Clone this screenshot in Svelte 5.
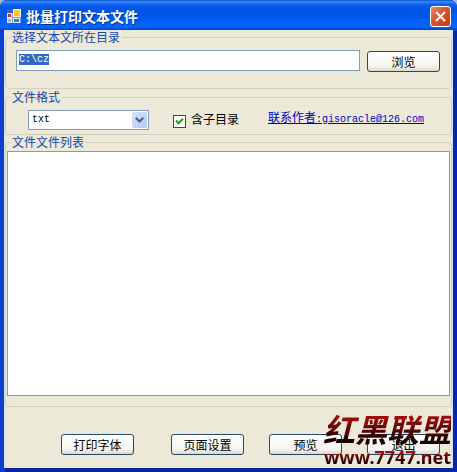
<script lang="ts">
    import { onMount } from "svelte";

    const formats = ["txt", "log", "ini"];

    let directory = $state("C:\\cz");
    let format = $state("txt");
    let includeSub = $state(true);

    let directoryInput: HTMLInputElement;

    onMount(() => {
        directoryInput.focus();
        directoryInput.select();
    });
</script>

<div class="window">
    <header class="titlebar">
        <svg class="app-icon" width="14" height="14" viewBox="0 0 14 14" aria-hidden="true">
            <rect width="14" height="14" fill="#7fa4e4" />
            <rect width="6" height="4" fill="#1f62e8" />
            <rect x="0.5" y="4.5" width="4" height="4" fill="#c8321e" stroke="#f3dcd4" />
            <rect x="6.5" y="0.5" width="7" height="7" fill="#ffc62e" stroke="#fff3c4" />
            <rect x="0.5" y="9.5" width="4" height="4" fill="#8fb2ea" stroke="#dfe9f8" />
            <rect x="6.5" y="9.5" width="6" height="4" fill="#3d78dc" stroke="#dfe9f8" />
        </svg>
        <h1>批量打印文本文件</h1>
        <button class="close" aria-label="关闭">
            <svg width="19" height="19" viewBox="0 0 19 19">
                <path d="M5 5L14 14M14 5L5 14" stroke="#fff" stroke-width="2.2" />
            </svg>
        </button>
    </header>

    <main>
        <fieldset class="directory">
            <legend>选择文本文所在目录</legend>
            <div class="row">
                <input
                    class="path"
                    type="text"
                    aria-label="目录"
                    bind:this={directoryInput}
                    bind:value={directory}
                />
                <button class="btn">浏览</button>
            </div>
        </fieldset>

        <fieldset class="format">
            <legend>文件格式</legend>
            <div class="row">
                <div class="combo">
                    <select aria-label="文件格式" bind:value={format}>
                        {#each formats as f}
                            <option value={f}>{f}</option>
                        {/each}
                    </select>
                    <span class="arrow">
                        <svg width="9" height="6" viewBox="0 0 9 6">
                            <path d="M0.7 0.7L4.5 4.5L8.3 0.7" fill="none" stroke="#4d6185" stroke-width="2" />
                        </svg>
                    </span>
                </div>
                <label class="check">
                    <input type="checkbox" bind:checked={includeSub} />
                    含子目录
                </label>
                <a href="mailto:gisoracle@126.com">联系作者<span class="latin">:gisoracle@126.com</span></a>
            </div>
        </fieldset>

        <fieldset class="files">
            <legend>文件文件列表</legend>
            <select class="list" multiple aria-label="文件列表"></select>
        </fieldset>

        <footer>
            <button class="btn">打印字体</button>
            <button class="btn second">页面设置</button>
            <button class="btn">预览</button>
            <button class="btn">退出</button>
            <div class="watermark">
                <span class="brand">红黑联盟</span>
                <span class="site">www.7747.net</span>
            </div>
        </footer>
    </main>
</div>

<style>
    :global(body) {
        background: #a9b9d0;
    }

    .window,
    .window * {
        box-sizing: border-box;
    }

    .window {
        display: flex;
        flex-direction: column;
        min-height: 100vh;
        overflow: hidden;
        border-radius: 7px 7px 0 0;
        background: #0a3fd0;
        color: #000;
        font: 12px/14px "Liberation Mono", "Noto Sans CJK SC", sans-serif;
    }

    button,
    input,
    select {
        margin: 0;
        font: inherit;
        color: inherit;
    }

    .titlebar {
        display: flex;
        align-items: center;
        height: 30px;
        padding: 2px 6px 0 7px;
        background: linear-gradient(
            #0a50cf 0%,
            #3a8cff 6%,
            #0f62ee 14%,
            #0254e3 30%,
            #0058ea 60%,
            #0566fc 84%,
            #0260f4 92%,
            #0340c0 100%
        );
    }

    h1 {
        flex: 1;
        margin: 0 0 0 5px;
        color: #fff;
        font: bold 14px/20px "Noto Sans CJK SC", sans-serif;
        text-shadow: 1px 1px #0a2f8c;
    }

    .close {
        display: grid;
        place-items: center;
        width: 21px;
        height: 21px;
        padding: 0;
        border: 1px solid #fff;
        border-radius: 3px;
        background: linear-gradient(135deg, #e98a6c, #dc5130 45%, #c43a17);
    }

    main {
        flex: 1;
        display: flex;
        flex-direction: column;
        margin: 0 4px 4px;
        border-right: 1px solid #cfe0f5;
        border-left: 1px solid #dbe6f2;
        box-shadow: 3px 3px 0 2px #0526a8;
        background: #ece9d8;
    }

    fieldset {
        min-width: 0;
        margin: 0;
        padding: 0;
        border: 1px solid #d0d0bf;
        border-radius: 4px;
    }

    legend {
        margin-left: 4px;
        padding: 0 2px;
        color: #1646a8;
        font: 12px/14px "Noto Sans CJK SC", sans-serif;
    }

    .row {
        display: flex;
    }

    .directory {
        height: 59px;
        margin-bottom: 1px;
    }

    .directory .row {
        gap: 7px;
        padding: 6px 11px 0 10px;
    }

    .path {
        flex: 1;
        min-width: 0;
        height: 21px;
        padding: 0 2px 3px;
        border: 1px solid #7f9db9;
        outline: none;
        background: #fff;
        font-size: 10px;
    }

    .path::selection {
        background: #316ac5;
        color: #fff;
    }

    .btn {
        flex: none;
        width: 73px;
        height: 21px;
        padding: 0;
        border: 1px solid #24486b;
        border-radius: 3px;
        background: linear-gradient(#fff, #f5f4ee 75%, #dcd8cb);
        font: 12px/18px "Noto Sans CJK SC", sans-serif;
    }

    .directory .btn {
        margin-top: 1px;
    }

    .format {
        height: 45px;
    }

    .format .row {
        align-items: flex-start;
        padding: 6px 0 0 22px;
    }

    .combo {
        display: grid;
        width: 121px;
        height: 20px;
    }

    .combo > * {
        grid-area: 1 / 1;
    }

    .combo select {
        appearance: none;
        padding: 0 20px 0 3px;
        border: 1px solid #7f9db9;
        border-radius: 0;
        background: #fff;
        font-size: 10px;
    }

    .arrow {
        display: grid;
        place-items: center;
        justify-self: end;
        width: 15px;
        margin: 2px;
        border-radius: 2px;
        background: linear-gradient(135deg, #d6e2fd, #b4c8f6);
        pointer-events: none;
    }

    .check {
        display: flex;
        align-items: center;
        gap: 5px;
        width: 95px;
        margin: 4px 0 0 24px;
    }

    .check input {
        appearance: none;
        width: 13px;
        height: 13px;
        border: 1px solid #1c5180;
        background: #fff;
    }

    .check input:checked {
        background: #fff
            url("data:image/svg+xml,%3Csvg xmlns='http://www.w3.org/2000/svg' viewBox='0 0 11 11'%3E%3Cpath d='M2 4.5L4.5 7.2L9 2.7' fill='none' stroke='%2321a121' stroke-width='2.2'/%3E%3C/svg%3E");
    }

    a {
        margin-top: 2px;
        color: #0000c8;
        white-space: nowrap;
    }

    .latin {
        font-size: 10px;
    }

    .files {
        flex: 1;
        padding: 2px 1px 10px;
    }

    .files legend {
        margin-left: 3px;
    }

    .list {
        display: block;
        width: 100%;
        height: calc(100vh - 227px);
        min-height: 100px;
        border: 1px solid #7f9db9;
        border-radius: 0;
        outline: none;
        background: #fff;
    }

    footer {
        position: relative;
        display: flex;
        justify-content: flex-end;
        gap: 25px;
        padding: 27px 12px 13px;
    }

    .second {
        margin-left: 12px;
    }

    /* site stamp laid over the last two buttons */
    .watermark {
        position: absolute;
        right: 1px;
        bottom: 2px;
        display: flex;
        flex-direction: column;
        align-items: flex-end;
        pointer-events: none;
    }

    .brand,
    .site {
        background: linear-gradient(#a80d0d 20%, #1c0000 80%);
        background-clip: text;
        color: transparent;
    }

    .brand {
        font: italic bold 32px/40px "Noto Sans CJK SC", sans-serif;
    }

    .site {
        font: bold 18px/18px "Noto Sans", sans-serif;
    }
</style>
